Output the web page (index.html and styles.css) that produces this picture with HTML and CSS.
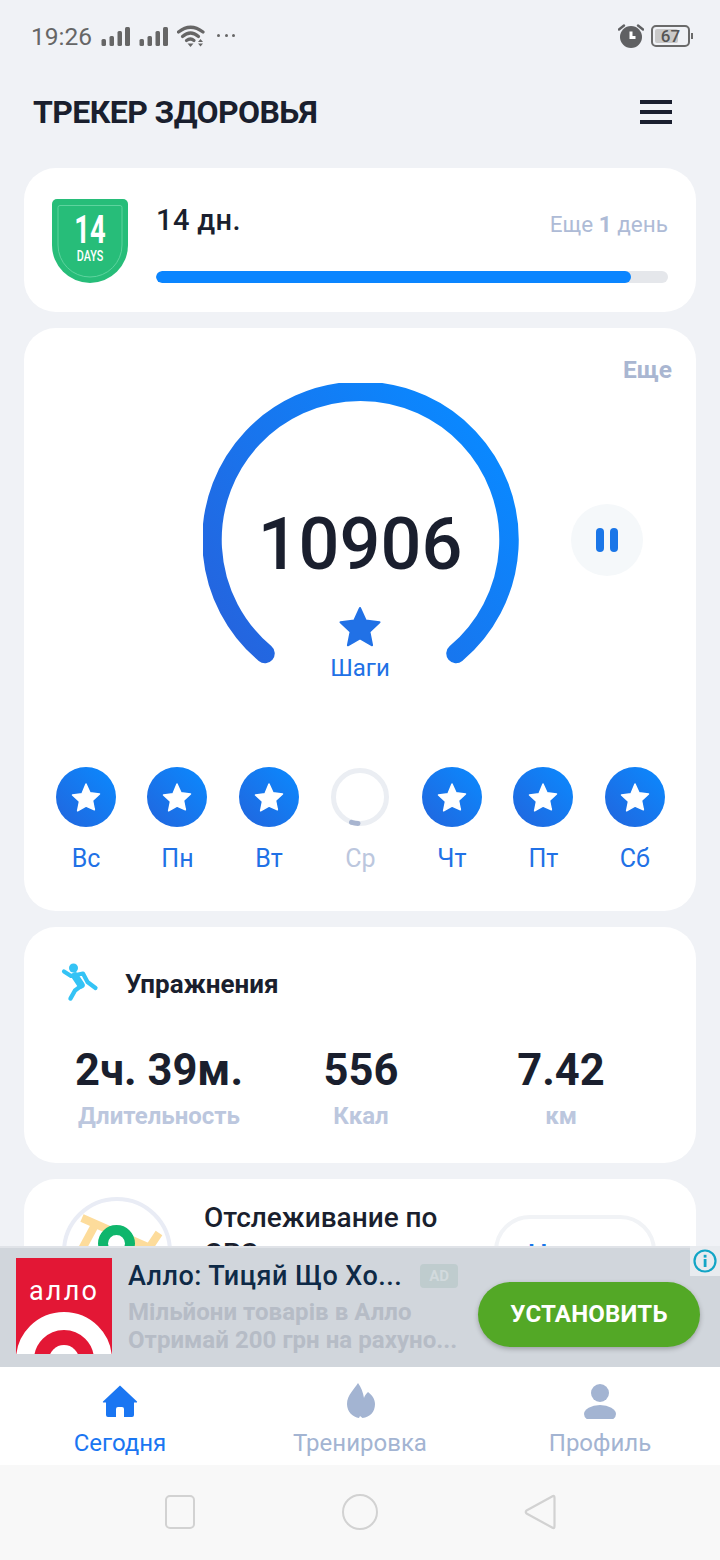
FILE: index.html
```html
<!DOCTYPE html>
<html lang="ru">
<head>
<meta charset="utf-8">
<title>Трекер здоровья</title>
<link rel="stylesheet" href="styles.css">
</head>
<body>
<div class="app">
  <div class="status">
    <span class="time">19:26</span>
    <svg class="sig" viewBox="0 0 30 20" width="30" height="20"><g fill="#666"><rect x="0.500" y="13" width="4.500" height="7" rx="1.500"/><rect x="8.500" y="10" width="4.500" height="10" rx="1.500"/><rect x="16.500" y="5" width="4.500" height="15" rx="1.500"/><rect x="24" y="1" width="5" height="19" rx="1.500"/></g></svg>
    <svg class="sig" viewBox="0 0 30 20" width="30" height="20"><g fill="#666"><rect x="0.500" y="13" width="4.500" height="7" rx="1.500"/><rect x="8.500" y="10" width="4.500" height="10" rx="1.500"/><rect x="16.500" y="5" width="4.500" height="15" rx="1.500"/><rect x="24" y="1" width="5" height="19" rx="1.500"/></g></svg>
    <svg class="wifi" viewBox="0 0 30 24" width="30" height="24"><g fill="none" stroke="#666" stroke-width="3.200" stroke-linecap="round"><path d="M1.500 8 Q13.500 -1.500 26 8"/><path d="M5.500 12.500 Q13.500 5.500 21.500 12.500"/><path d="M9.500 16.500 Q13.500 13.500 17 16.500"/></g><path d="M10.500 19.500h6l-3 3.500z" fill="#666"/><path d="M23.500 15l2.500 3h-5zM21 19.500h5l-2.500 3z" fill="#666"/></svg>
    <span class="dots"><i></i><i></i><i></i></span>
    <span class="grow"></span>
    <svg class="alarm" viewBox="0 0 26 26" width="26" height="26"><circle cx="13" cy="14" r="11" fill="#5f6062"/><path d="M13 8.500v6h4.500" fill="none" stroke="#fff" stroke-width="3"/><path d="M1 6.500 6 2.500M25 6.500 20 2.500" stroke="#5f6062" stroke-width="2.400" stroke-linecap="round"/></svg>
    <span class="batt"><span class="batt-fill"></span><span class="batt-num">67</span></span>
  </div>

  <header class="head">
    <h1 class="title">ТРЕКЕР ЗДОРОВЬЯ</h1>
    <span class="burger"><i></i><i></i><i></i></span>
  </header>

  <main class="content">
    <section class="card streak">
      <div class="shield">
        <svg class="shield-bg" viewBox="0 0 76 84" width="76" height="84"><path d="M5 0H71a5 5 0 0 1 5 5V46a38 38 0 0 1-76 0V5a5 5 0 0 1 5-5z" fill="#27bd79"/><path d="M8 6.500H68a2 2 0 0 1 2 2V46a32 32 0 0 1-64 0V8.500a2 2 0 0 1 2-2z" fill="none" stroke="#5ed39e" stroke-width="1"/></svg>
        <span class="shield-num">14</span>
        <span class="shield-sub">DAYS</span>
      </div>
      <div class="streak-body">
        <div class="streak-top">
          <span class="streak-days">14 дн.</span>
          <span class="streak-more">Еще <b>1</b> день</span>
        </div>
        <div class="bar"><div class="bar-fill"></div></div>
      </div>
    </section>

    <section class="card steps">
      <div class="more">Еще</div>
      <div class="gauge">
        <svg class="arc" viewBox="0 0 316 290" width="316" height="290">
          <defs><linearGradient id="g" gradientUnits="userSpaceOnUse" x1="50" y1="280" x2="300" y2="80"><stop offset="0" stop-color="#2465df"/><stop offset="1" stop-color="#0a88ff"/></linearGradient></defs>
          <path d="M62 270.500 A148.500 148.500 0 1 1 253 270.500" fill="none" stroke="url(#g)" stroke-width="19.500" stroke-linecap="round"/>
        </svg>
        <div class="count">10906</div>
        <svg class="big-star" viewBox="0 0 44 42" width="44" height="42"><path d="M22 2l5.800 12.600 13.700 1.700-10.100 9.400 2.700 13.600L22 32.500 9.900 39.300l2.700-13.600L2.500 16.300l13.700-1.700z" fill="#2171e6" stroke="#2171e6" stroke-width="2" stroke-linejoin="round"/></svg>
        <div class="steps-label">Шаги</div>
        <div class="pause"><i></i><i></i></div>
      </div>
      <div class="days">
        <div class="day"><span class="dot"><svg viewBox="0 0 32 32" width="32" height="32"><use href="#s"/></svg></span><span class="day-name">Вс</span></div>
        <div class="day"><span class="dot"><svg viewBox="0 0 32 32" width="32" height="32"><use href="#s"/></svg></span><span class="day-name">Пн</span></div>
        <div class="day"><span class="dot"><svg viewBox="0 0 32 32" width="32" height="32"><use href="#s"/></svg></span><span class="day-name">Вт</span></div>
        <div class="day"><span class="ring"><svg viewBox="0 0 60 60" width="60" height="60"><circle cx="30" cy="30" r="26.500" fill="none" stroke="#ebeef3" stroke-width="5"/><path d="M21.500 55.300 Q25 56.300 28 56.400" fill="none" stroke="#a8b5d0" stroke-width="5" stroke-linecap="round"/></svg></span><span class="day-name off">Ср</span></div>
        <div class="day"><span class="dot"><svg viewBox="0 0 32 32" width="32" height="32"><use href="#s"/></svg></span><span class="day-name">Чт</span></div>
        <div class="day"><span class="dot"><svg viewBox="0 0 32 32" width="32" height="32"><use href="#s"/></svg></span><span class="day-name">Пт</span></div>
        <div class="day"><span class="dot"><svg viewBox="0 0 32 32" width="32" height="32"><use href="#s"/></svg></span><span class="day-name">Сб</span></div>
      </div>
      <svg class="defs" width="0" height="0"><defs><path id="s" d="M16 3l4 8.700 9.500 1.200-7 6.500 1.900 9.400L16 25.100l-8.400 4.700 1.900-9.400-7-6.500 9.500-1.200z" fill="#fff" stroke="#fff" stroke-width="1.500" stroke-linejoin="round"/></defs></svg>
    </section>

    <section class="card ex">
      <div class="ex-head">
        <svg class="runner" viewBox="0 0 40 40" width="40" height="40"><circle cx="13.500" cy="6" r="4.500" fill="#34c3f5"/><g fill="none" stroke="#34c3f5" stroke-linecap="round" stroke-linejoin="round"><path d="M4 9.500 11 14 23 11.500 27.500 20 35.500 26" stroke-width="4.200"/><path d="M15 14 21 23" stroke-width="7.500"/><path d="M21 24 15 28.500 10.500 36.500" stroke-width="4.400"/></g></svg>
        <span class="ex-title">Упражнения</span>
      </div>
      <div class="stats">
        <div class="stat s1"><span class="val">2ч. 39м.</span><span class="lab">Длительность</span></div>
        <div class="stat s2"><span class="val">556</span><span class="lab">Ккал</span></div>
        <div class="stat s3"><span class="val">7.42</span><span class="lab">км</span></div>
      </div>
    </section>

    <section class="card gps">
      <svg class="map" viewBox="0 0 110 110" width="110" height="110"><circle cx="55" cy="55" r="53" fill="#fff" stroke="#e9ecf5" stroke-width="4"/><g stroke="#fddc9b" stroke-width="8" fill="none"><path d="M20 21 L45 32 L72 44 L88 51"/><path d="M33 28 L20 52"/><path d="M97 36 L85 54"/></g><circle cx="54.500" cy="46.500" r="13.500" fill="#fff" stroke="#0fb66c" stroke-width="10"/></svg>
      <div class="gps-text">Отслеживание по GPS</div>
      <div class="gps-btn">Начать</div>
    </section>
  </main>

  <aside class="ad">
    <div class="ad-logo">
      <span class="ad-brand">алло</span>
      <span class="ad-target"></span>
    </div>
    <div class="ad-text">
      <div class="ad-title"><span class="ad-name">Алло: Тицяй Що Хо...</span><span class="ad-tag">AD</span></div>
      <div class="ad-desc">Мільйони товарів в Алло</div>
      <div class="ad-desc">Отримай 200 грн на рахуно...</div>
    </div>
    <div class="ad-cta">УСТАНОВИТЬ</div>
    <div class="ad-info"><svg viewBox="0 0 26 26" width="26" height="26"><circle cx="13" cy="13" r="10.500" fill="none" stroke="#12a5c6" stroke-width="2.200"/><rect x="11.700" y="11" width="2.800" height="8" fill="#12a5c6"/><rect x="11.700" y="6.800" width="2.800" height="2.800" fill="#12a5c6"/></svg></div>
  </aside>

  <nav class="tabs">
    <div class="tab active">
      <svg viewBox="0 0 36 36" width="36" height="36"><path d="M18 2.500 35 18.500c.4.600 0 1-.5 1H32V32a2 2 0 0 1-2 2H22V26a2 2 0 0 0-2-2h-4a2 2 0 0 0-2 2v8H6a2 2 0 0 1-2-2V19.500H1.500c-.5 0-.9-.4-.5-1z" fill="#1a76f2"/></svg>
      <span>Сегодня</span>
    </div>
    <div class="tab">
      <svg viewBox="0 0 36 36" width="36" height="36"><path d="M16 0C12.500 6 5 12 5 21 5 29 11 34 17 35L18 33 20.500 35C28 34 33 29 33 21 33 16 30 12 26 9 24 11 22.500 13 22 15 21 9 19 4 16 0z" fill="#a3b4d2"/></svg>
      <span>Тренировка</span>
    </div>
    <div class="tab">
      <svg viewBox="0 0 36 36" width="36" height="36"><circle cx="18" cy="10" r="9" fill="#a3b4d2"/><ellipse cx="18" cy="31" rx="16" ry="9" fill="#a3b4d2"/></svg>
      <span>Профиль</span>
    </div>
  </nav>

  <div class="sysnav">
    <span class="sq"></span>
    <span class="ci"></span>
    <svg viewBox="0 0 34 38" width="34" height="38"><path d="M30 3 L3.500 17.500 Q2 19 3.500 20.500 L30 35 Q31.500 35.500 31.500 33 V5 Q31.500 2.500 30 3z" fill="none" stroke="#d2d2d2" stroke-width="2.200" stroke-linejoin="round"/></svg>
  </div>
</div>
</body>
</html>
```
FILE: styles.css
```css
* { box-sizing: border-box; }
html, body { margin: 0; padding: 0; }
body { font-family: Roboto, "Liberation Sans", sans-serif; color: #1a1f2e; background: #f0f2f6; }
.app { position: relative; width: 720px; height: 1560px; overflow: hidden; display: flex; flex-direction: column; background: #f0f2f6; }

.status { height: 72px; display: flex; align-items: center; padding: 0 30px 0 31px; color: #666; flex: none; }
.time { font-size: 24.500px; width: 60px; margin-right: 10px; white-space: nowrap; }
.sig { margin-right: 8px; margin-top: -1px; }
.wifi { margin-right: 10px; }
.dots { display: flex; gap: 4.500px; margin-top: -2px; }
.dots i { width: 3px; height: 3px; border-radius: 50%; background: #666; }
.grow { flex: 1; }
.alarm { margin-right: 7px; }
.batt { position: relative; width: 39px; height: 22px; border: 2px solid #6a6a6a; border-radius: 5px; display: block; }
.batt::after { content: ""; position: absolute; right: -5px; top: 6px; width: 2px; height: 6px; background: #6a6a6a; }
.batt-fill { position: absolute; left: 2px; top: 2px; bottom: 2px; width: 23px; background: #c9c9c9; border-radius: 2px; }
.batt-num { position: absolute; left: 0; right: 0; top: 0; line-height: 18px; text-align: center; font-size: 17px; font-weight: 500; color: #555; }

.head { height: 96px; display: flex; align-items: center; justify-content: space-between; padding: 0 48px 16px 33px; flex: none; }
.title { margin: 0; font-size: 32px; font-weight: 700; color: #1a1f2e; letter-spacing: -.6px; }
.burger { display: flex; flex-direction: column; gap: 6px; }
.burger i { width: 32px; height: 4px; background: #1a1f2e; display: block; }

.content { flex: none; height: 1199px; padding: 0 24px; display: flex; flex-direction: column; gap: 16px; overflow: hidden; }
.card { background: #fff; border-radius: 32px; flex: none; }

.streak { height: 144px; display: flex; padding: 31px 28px 0 28px; }
.shield { position: relative; width: 76px; height: 84px; flex: none; color: #fff; text-align: center; }
.shield-bg { display: block; }
.shield-num { position: absolute; left: 0; right: 0; top: 14px; font-size: 38px; font-weight: 700; line-height: 34px; transform: scaleX(.72); }
.shield-sub { position: absolute; left: 0; right: 0; top: 48px; font-size: 15px; font-weight: 500; line-height: 18px; transform: scaleX(.72); }
.streak-body { flex: 1; margin-left: 28px; }
.streak-top { display: flex; justify-content: space-between; height: 72px; }
.streak-days { font-size: 29px; font-weight: 500; line-height: 44px; margin-top: -1px; letter-spacing: .4px; }
.streak-more { font-size: 22.500px; line-height: 50px; color: #aebbd6; }
.streak-more b { font-weight: 700; }
.bar { height: 12px; border-radius: 6px; background: #e5e7eb; overflow: hidden; }
.bar-fill { height: 100%; width: 475px; background: #0a85ff; border-radius: 6px; }

.steps { height: 583px; position: relative; padding: 0 24px; }
.more { position: absolute; right: 24px; top: 27px; font-size: 24.500px; font-weight: 700; color: #a9b6d1; line-height: 30px; }
.gauge { position: relative; height: 439px; }
.arc { position: absolute; left: 155px; top: 55px; }
.count { position: absolute; left: 0; right: 0; top: 172px; text-align: center; font-size: 72px; font-weight: 500; line-height: 90px; }
.big-star { position: absolute; left: 290px; top: 278px; }
.steps-label { position: absolute; left: 0; right: 0; top: 324px; text-align: center; font-size: 24px; line-height: 32px; color: #2171e6; }
.pause { position: absolute; left: 523px; top: 176px; width: 72px; height: 72px; border-radius: 50%; background: #f5f8fa; display: flex; align-items: center; justify-content: center; gap: 6px; }
.pause i { width: 8px; height: 24px; border-radius: 4px; background: #1a76e8; }
.days { display: flex; justify-content: space-between; padding: 0 7.200px 0 8px; }
.day { width: 60px; display: flex; flex-direction: column; align-items: center; }
.dot { width: 60px; height: 60px; border-radius: 50%; background: linear-gradient(45deg, #2265dd, #0a8aff); display: flex; align-items: center; justify-content: center; }
.ring { width: 60px; height: 60px; display: block; }
.day-name { font-size: 25px; line-height: 32px; margin-top: 16px; color: #2171e6; }
.day-name.off { color: #bcc7de; }
.defs { position: absolute; }

.ex { height: 236px; padding: 0 36px; }
.ex-head { display: flex; align-items: center; height: 113px; padding-bottom: 2px; }
.runner { margin-right: 25px; margin-top: -1px; }
.ex-title { font-size: 26px; font-weight: 700; margin-top: 3px; }
.stats { height: 100px; display: flex; padding-top: 3px; }
.stat { display: flex; flex-direction: column; align-items: center; flex: none; }
.s1 { width: 196px; margin-left: 1px; }
.s2 { width: 190px; margin-left: 9px; }
.s3 { width: 210px; }
.val { font-size: 43.500px; font-weight: 700; line-height: 56px; white-space: nowrap; }
.lab { font-size: 24px; font-weight: 700; line-height: 30px; color: #bcc7de; margin-top: 2px; white-space: nowrap; }

.gps { height: 200px; display: flex; padding: 18px 40px 0 38px; }
.map { flex: none; }
.gps-text { width: 260px; margin-left: 32px; margin-top: 3px; font-size: 28px; font-weight: 500; line-height: 36px; }
.gps-btn { margin-left: 31px; margin-top: 18px; width: 162px; height: 84px; border: 4px solid #f1f3f6; border-radius: 36px; text-align: center; font-size: 28px; font-weight: 500; color: #1a76e8; line-height: 72px; flex: none; }

.ad { position: absolute; left: 0; top: 1246px; width: 720px; height: 121px; background: #d1d6dc; border-top: 2px solid #e0e3e8; display: flex; padding: 10px 20px 0 16px; }
.ad-logo { position: relative; width: 96px; height: 96px; background: #e31735; overflow: hidden; flex: none; }
.ad-brand { position: absolute; left: 0; right: 0; top: 18px; text-align: center; color: #fff; font-size: 27px; font-weight: 400; line-height: 30px; letter-spacing: 2.200px; }
.ad-target { position: absolute; left: 0; top: 54px; width: 96px; height: 96px; border-radius: 50%; border: 18px solid #fff; background: #e31735; }
.ad-target::after { content: ""; position: absolute; left: 15px; top: 15px; width: 30px; height: 30px; border-radius: 50%; background: #fff; }
.ad-text { width: 350px; margin-left: 16px; flex: none; }
.ad-title { display: flex; align-items: center; height: 36px; margin-bottom: 4px; }
.ad-name { font-size: 27px; font-weight: 500; color: #0e2a47; white-space: nowrap; letter-spacing: .45px; }
.ad-tag { margin-left: 18px; width: 38px; height: 24px; border-radius: 4px; background: #bfccce; color: #d2dadd; font-size: 15px; font-weight: 700; line-height: 24px; text-align: center; }
.ad-desc { font-size: 24px; font-weight: 700; color: #b6bcc6; line-height: 28px; white-space: nowrap; letter-spacing: .05px; }
.ad-cta { margin-top: 24px; width: 222px; height: 65px; border-radius: 33px; background: #53a826; color: #fff; font-size: 24px; font-weight: 700; line-height: 65px; text-align: center; letter-spacing: .2px; box-shadow: 0 2px 5px rgba(0,0,0,.25); flex: none; }
.ad-info { position: absolute; right: 0; top: -2px; width: 30px; height: 30px; background: #e8ebef; display: flex; align-items: center; justify-content: center; }

.tabs { position: absolute; left: 0; top: 1367px; width: 720px; height: 98px; background: #fff; display: grid; grid-template-columns: repeat(3, 240px); }
.tab { display: flex; flex-direction: column; align-items: center; padding-top: 16px; font-size: 24px; color: #a3b4d2; }
.tab span { line-height: 30px; margin-top: 9px; }
.tab.active { color: #1a76f2; }
.sysnav { position: absolute; left: 0; top: 1465px; width: 720px; height: 95px; background: #f8f8f8; display: grid; grid-template-columns: repeat(3, 180px); justify-content: center; justify-items: center; align-items: center; padding-bottom: 2px; }
.sq { width: 30px; height: 34px; border: 2px solid #d2d2d2; border-radius: 5px; }
.ci { width: 36px; height: 36px; border: 2px solid #d2d2d2; border-radius: 50%; }
```
